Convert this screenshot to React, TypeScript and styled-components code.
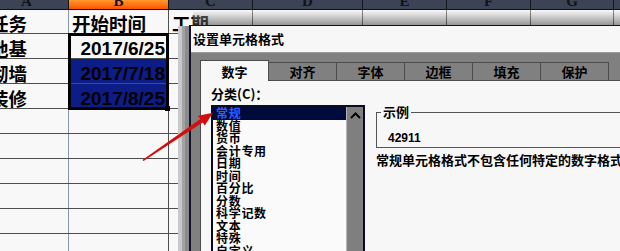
import React from 'react';
import styled, { createGlobalStyle } from 'styled-components';

const CJK = `"Noto Sans CJK SC", "Noto Sans", sans-serif`;

const GlobalStyle = createGlobalStyle`
  html, body { margin: 0; padding: 0; background: #f8f8f8; }
  * { box-sizing: border-box; }
`;

const columns = [
  { letter: 'A', width: 69 },
  { letter: 'B', width: 100 },
  { letter: 'C', width: 84 },
  { letter: 'D', width: 110 },
  { letter: 'E', width: 84 },
  { letter: 'F', width: 84 },
  { letter: 'G', width: 83 },
  { letter: 'H', width: 60 },
];
const gridCols = columns.map((c) => `${c.width}px`).join(' ');

type Row = { a?: string; b?: string; c?: string; date?: boolean; picked?: boolean };

const rows: Row[] = [
  { a: '任务', b: '开始时间', c: '工期' },
  { a: '地基', b: '2017/6/25', date: true },
  { a: '砌墙', b: '2017/7/18', date: true, picked: true },
  { a: '装修', b: '2017/8/25', date: true, picked: true },
  {}, {}, {}, {}, {}, {},
];

const categories = ['常规', '数值', '货币', '会计专用', '日期', '时间', '百分比', '分数', '科学记数', '文本', '特殊', '自定义'];
const tabs = ['数字', '对齐', '字体', '边框', '填充', '保护'];

const App: React.FC = () => {
  return (
    <Root>
      <GlobalStyle />
      <Sheet>
        <HeaderRow>
          {columns.map((col, i) => (
            <HeaderCell key={col.letter} $hot={col.letter === 'B'} $first={i === 0}>
              <span>{col.letter}</span>
            </HeaderCell>
          ))}
        </HeaderRow>
        {rows.map((row, i) => (
          <SheetRow key={i} $first={i === 0}>
            <Cell $col='a'><CellText $cut>{row.a}</CellText></Cell>
            <Cell $col='b' $picked={row.picked} $right={row.date}>
              <CellText $date={row.date}>{row.b}</CellText>
            </Cell>
            <Cell><CellText>{row.c}</CellText></Cell>
            <Cell />
            <Cell />
            <Cell />
            <Cell />
            <Cell />
          </SheetRow>
        ))}
        <Selection />
      </Sheet>

      <Dialog>
        <TitleBar>设置单元格格式</TitleBar>
        <Body>
          <TabRow>
            {tabs.map((t, i) => (
              <Tab key={t} $active={i === 0}>{t}</Tab>
            ))}
          </TabRow>
          <Panel>
            <LeftCol>
              <Label>分类(C)：</Label>
              <ListBox>
                <Items>
                  {categories.map((c, i) => (
                    <Item key={c} $selected={i === 0}>{c}</Item>
                  ))}
                </Items>
                <ScrollBar>
                  <svg width='17' height='16' viewBox='0 0 17 16'>
                    <polyline points='4,10 8.5,5.5 13,10' fill='none' stroke='#000' strokeWidth='2' />
                  </svg>
                </ScrollBar>
              </ListBox>
            </LeftCol>
            <RightCol>
              <Sample>
                <legend>示例</legend>
                <SampleValue>42911</SampleValue>
              </Sample>
              <Hint>常规单元格格式不包含任何特定的数字格式</Hint>
            </RightCol>
          </Panel>
        </Body>
      </Dialog>

      <Arrow viewBox='0 0 620 251' width='620' height='251'>
        <polygon
          points='142.4,159.9 200.3,119.0 198.0,115.8 213,112.8 204.8,125.6 202.7,122.4 143.6,161.1'
          fill='#d40e0e'
        />
      </Arrow>
    </Root>
  );
};

const Root = styled.div`
  position: relative;
  width: 620px;
  height: 251px;
  overflow: hidden;
  background: #f8f8f8;
  font-family: ${CJK};
`;

const Sheet = styled.div`
  position: relative;
`;

const HeaderRow = styled.div`
  display: grid;
  grid-template-columns: ${gridCols};
  height: 10px;
  border-bottom: 1px solid #111;
  overflow: hidden;
`;

const HeaderCell = styled.div<{ $hot?: boolean; $first?: boolean }>`
  display: flex;
  justify-content: center;
  align-items: flex-end;
  overflow: hidden;
  padding-right: ${(p) => (p.$first ? '15px' : '0')};
  background: ${(p) => (p.$hot ? 'linear-gradient(#ff9a2a, #ff5200)' : '#3b4355')};
  border-right: 1px solid #14161c;
  span {
    font: 700 15px/1 'Liberation Serif', serif;
    color: #111318;
  }
`;

const SheetRow = styled.div<{ $first?: boolean }>`
  display: grid;
  grid-template-columns: ${gridCols};
  height: ${(p) => (p.$first ? '24px' : '25px')};
  border-bottom: 1px solid #4e4e4e;
`;

const Cell = styled.div<{ $col?: string; $picked?: boolean; $right?: boolean }>`
  display: flex;
  align-items: flex-end;
  justify-content: ${(p) => (p.$right ? 'flex-end' : 'flex-start')};
  overflow: hidden;
  white-space: nowrap;
  padding: 0 3px 1px 3px;
  background: ${(p) => (p.$picked ? '#0c1d87' : 'transparent')};
  border-right: 1px solid ${(p) => (p.$col === 'a' ? '#8a96ac' : '#4e4e4e')};
`;

const CellText = styled.span<{ $cut?: boolean; $date?: boolean }>`
  font-family: ${(p) => (p.$date ? `'Liberation Sans', sans-serif` : CJK)};
  font-size: ${(p) => (p.$date ? '19px' : '18.5px')};
  font-weight: 700;
  line-height: 17px;
  color: #000;
  margin-left: ${(p) => (p.$cut ? '-13px' : '0')};
`;

const Selection = styled.div`
  position: absolute;
  left: 68px;
  top: 33px;
  width: 101px;
  height: 77px;
  border: 3px solid #000;
  pointer-events: none;
  &::after {
    content: '';
    position: absolute;
    right: -4px;
    bottom: -4px;
    width: 5px;
    height: 5px;
    background: #000;
  }
`;

const Dialog = styled.div`
  position: absolute;
  left: 189px;
  top: 25px;
  right: 0;
  bottom: 0;
  display: flex;
  flex-direction: column;
  background: #808080;
  border-left: 2px solid #12122e;
  border-top: 1px solid #12122e;
  &::before {
    content: '';
    position: absolute;
    left: -13px;
    top: 0;
    bottom: 0;
    width: 11px;
    background: linear-gradient(to right, #c9c9c9 0 4px, #a3a3a3 4px 7px, #8b8b8b 7px 11px);
  }
  &::after {
    content: '';
    position: absolute;
    left: 2px;
    right: 0;
    top: -16px;
    height: 15px;
    background: linear-gradient(rgba(255, 255, 255, 0.35), rgba(70, 70, 70, 0.55));
  }
`;

const TitleBar = styled.div`
  height: 27px;
  padding-left: 2px;
  background: #f7f7f7;
  border-bottom: 1px solid #9a9a9a;
  font: 700 13px/26px ${CJK};
  color: #000;
`;

const Body = styled.div`
  flex: 1;
  display: flex;
  flex-direction: column;
  padding: 7px 0 0 9px;
`;

const TabRow = styled.div`
  display: flex;
  align-items: flex-end;
  height: 20px;
`;

const Tab = styled.div<{ $active?: boolean }>`
  width: 69px;
  height: ${(p) => (p.$active ? '21px' : '18px')};
  margin-bottom: ${(p) => (p.$active ? '-1px' : '0')};
  margin-right: -1px;
  position: relative;
  z-index: ${(p) => (p.$active ? 1 : 0)};
  display: flex;
  align-items: center;
  justify-content: center;
  background: ${(p) => (p.$active ? '#f7f7f7' : '#808080')};
  border: 1px solid #4c4c4c;
  border-bottom: none;
  font: 700 13px/1 ${CJK};
  color: #000;
`;

const Panel = styled.div`
  flex: 1;
  display: flex;
  gap: 11px;
  padding: 5px 0 0 10px;
  background: #f7f7f7;
  border-top: 1px solid #4c4c4c;
  border-left: 1px solid #4c4c4c;
  min-height: 0;
`;

const LeftCol = styled.div`
  width: 154px;
  display: flex;
  flex-direction: column;
`;

const Label = styled.div`
  font: 700 13px/16px ${CJK};
  color: #000;
  margin-bottom: 3px;
`;

const ListBox = styled.div`
  flex: 1;
  display: flex;
  border: 2px solid #0a0a20;
  border-bottom: none;
  background: #fafafa;
`;

const Items = styled.div`
  flex: 1;
  display: flex;
  flex-direction: column;
`;

const Item = styled.div<{ $selected?: boolean }>`
  height: 12.5px;
  padding-left: 3px;
  font: 700 12px/12.5px ${CJK};
  letter-spacing: 0.7px;
  color: ${(p) => (p.$selected ? '#2f5fff' : '#000')};
  background: ${(p) => (p.$selected ? '#000a3c' : 'transparent')};
  white-space: nowrap;
`;

const ScrollBar = styled.div`
  width: 17px;
  background: #7f7f7f;
  border-left: 1px solid #b5b5b5;
  svg {
    display: block;
    margin-top: 1px;
  }
`;

const RightCol = styled.div`
  flex: 1;
  display: flex;
  flex-direction: column;
  min-width: 0;
  padding-top: 19px;
`;

const Sample = styled.fieldset`
  margin: 0;
  padding: 12px 0 2px 0;
  border: 1px solid #555;
  border-right: none;
  legend {
    margin-left: 4px;
    padding: 0 2px;
    font: 700 13px/14px ${CJK};
    color: #000;
  }
`;

const SampleValue = styled.div`
  padding-left: 11px;
  font: 700 12px/14px 'Liberation Sans', sans-serif;
  color: #000;
`;

const Hint = styled.div`
  margin-top: 4px;
  font: 700 13px/16px ${CJK};
  color: #000;
  white-space: nowrap;
`;

const Arrow = styled.svg`
  position: absolute;
  left: 0;
  top: 0;
  pointer-events: none;
`;

export default App;
